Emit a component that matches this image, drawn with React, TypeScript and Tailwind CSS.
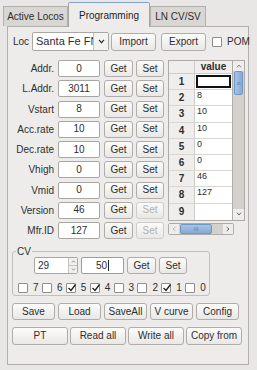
import React from "react";

const btn =
  "flex shrink-0 items-center justify-center whitespace-nowrap rounded-[3px] border border-[#b0ada8] bg-gradient-to-b from-[#fbfbfa] to-[#e9e8e6] text-[#2e2e2e] leading-none";
const input =
  "flex shrink-0 items-center justify-center rounded-[2px] border border-[#a9a7a3] bg-white text-[#2e2e2e] leading-none";

const fields: [string, string, boolean][] = [
  ["Addr.", "0", true],
  ["L.Addr.", "3011", true],
  ["Vstart", "8", true],
  ["Acc.rate", "10", true],
  ["Dec.rate", "10", true],
  ["Vhigh", "0", true],
  ["Vmid", "0", true],
  ["Version", "46", false],
  ["Mfr.ID", "127", false],
];

const rows = ["", "8", "10", "10", "0", "0", "46", "127", ""];

function Check({ on }: { on?: boolean }) {
  return (
    <span className="relative inline-block h-[10px] w-[10px] shrink-0 rounded-[1px] border border-[#8f8d89] bg-white">
      {on && (
        <svg viewBox="0 0 10 10" className="absolute left-[0px] top-[-1px] h-[10px] w-[10px]">
          <path d="M1.5 5 L4 7.5 L8.5 1.5" fill="none" stroke="#222" strokeWidth="1.4" />
        </svg>
      )}
    </span>
  );
}

function Tab({ label, active, w }: { label: string; active?: boolean; w: string }) {
  return (
    <div
      className={`flex items-center justify-center whitespace-nowrap border border-b-0 ${w} ${
        active
          ? "relative top-[1px] h-[25px] rounded-t-[2px] border-[#a8a6a2] border-t-[#7ea3d0] bg-[#edeceb] text-[#1e1e1e]"
          : "h-[20px] border-[#b2afab] bg-[#d9d7d3] text-[#2e2e2e]"
      }`}
    >
      {label}
    </div>
  );
}

export default function App() {
  return (
    <div
      className="relative h-[370px] w-[257px] overflow-hidden bg-[#e8e7e5] text-[10px] text-[#2e2e2e]"
      style={{ fontFamily: '"Liberation Sans", Arial, sans-serif' }}
    >
      <div className="flex h-[26px] items-end pl-[3px]">
        <Tab label="Active Locos" w="w-[65px]" />
        <Tab label="Programming" w="w-[82px]" active />
        <Tab label="LN CV/SV" w="w-[56px]" />
      </div>

      <div className="ml-[7px] h-[339px] w-[242px] border border-[#b2afab] bg-[#edeceb] px-[4px] pt-[5px]">
        {/* loc row */}
        <div className="flex h-[19px] items-center">
          <span className="w-[20px] shrink-0 pl-[1px]">Loc</span>
          <div className="flex h-[19px] w-[77px] shrink-0 items-center rounded-[2px] border border-[#a9a7a3] bg-white">
            <span className="w-[60px] overflow-hidden whitespace-nowrap pl-[3px] text-[11px]">Santa Fe FN</span>
            <span className="flex h-full w-[15px] items-center justify-center border-l border-[#c4c2be] bg-[#f3f3f2]">
              <svg viewBox="0 0 8 6" className="h-[5px] w-[7px]">
                <path d="M1 1 L4 4.5 L7 1" fill="none" stroke="#333" strokeWidth="1.4" />
              </svg>
            </span>
          </div>
          <div className={`${btn} ml-[2px] h-[18px] w-[45px]`}>Import</div>
          <div className={`${btn} ml-[5px] h-[18px] w-[45px]`}>Export</div>
          <span className="ml-[6px] flex shrink-0 items-center gap-[5px]">
            <Check />
            <span>POM</span>
          </span>
        </div>

        {/* fields + table */}
        <div className="mt-[9px] flex">
          <div className="flex w-[152px] shrink-0 flex-col gap-[3.25px]">
            {fields.map(([l, v, setOn]) => (
              <div key={l} className="flex h-[17px] items-center">
                <span className="w-[42px] shrink-0 whitespace-nowrap text-right">{l}</span>
                <div className={`${input} ml-[4px] h-[17px] w-[42px]`}>{v}</div>
                <div className={`${btn} ml-[4px] h-[17px] w-[29px]`}>Get</div>
                <div
                  className={`${btn} ml-[3px] h-[17px] w-[28px] ${
                    setOn ? "" : "border-[#cfcdc9] text-[#b4b2ae]"
                  }`}
                >
                  Set
                </div>
              </div>
            ))}
          </div>

          <div className="ml-[4px] flex flex-col">
            <div className="flex">
              <div className="flex w-[65px] flex-col border border-[#aeaba7] bg-white">
                <div className="flex h-[13px] border-b border-[#cfcdc9] bg-[#efeeed]">
                  <div className="w-[26px] border-r border-[#cfcdc9]" />
                  <div className="flex-1 text-center font-bold leading-[12px]">value</div>
                </div>
                {rows.map((v, i) => (
                  <div key={i} className="flex h-[16.2px] border-b border-[#d8d6d2] last:border-b-0">
                    <div className="flex w-[26px] items-center justify-center border-r border-[#cfcdc9] bg-[#efeeed] font-bold">
                      {i + 1}
                    </div>
                    <div className="relative flex-1 pl-[2px] text-[9px] leading-[11px]">
                      {i === 0 ? (
                        <div className="absolute inset-[1px] border-2 border-[#111]" />
                      ) : (
                        v
                      )}
                    </div>
                  </div>
                ))}
              </div>
              {/* vertical scrollbar */}
              <div className="flex w-[12px] flex-col border border-l-0 border-[#aeaba7] bg-[#d3d1cd]">
                <div className="flex h-[10px] items-center justify-center bg-[#eeedeb]">
                  <svg viewBox="0 0 8 6" className="h-[4px] w-[6px]">
                    <path d="M1 5 L4 1.5 L7 5" fill="none" stroke="#666" strokeWidth="1.2" />
                  </svg>
                </div>
                <div className="mx-[1px] flex h-[24px] items-center justify-center rounded-[2px] border border-[#6f97c8] bg-gradient-to-r from-[#a9c4e4] to-[#86aad6]">
                  <span className="text-[7px] leading-none text-[#5d80ad]">≡</span>
                </div>
                <div className="flex-1" />
                <div className="flex h-[11px] items-center justify-center bg-[#eeedeb]">
                  <svg viewBox="0 0 8 6" className="h-[4px] w-[6px]">
                    <path d="M1 1 L4 4.5 L7 1" fill="none" stroke="#444" strokeWidth="1.2" />
                  </svg>
                </div>
              </div>
            </div>
            {/* horizontal scrollbar */}
            <div className="mt-[2px] flex h-[12px] w-[66px] items-stretch rounded-[2px] border border-[#aeaba7] bg-[#d3d1cd]">
              <div className="flex w-[10px] items-center justify-center bg-[#eeedeb]">
                <svg viewBox="0 0 6 8" className="h-[6px] w-[4px]">
                  <path d="M5 1 L1.5 4 L5 7" fill="none" stroke="#aaa" strokeWidth="1.2" />
                </svg>
              </div>
              <div className="ml-[1px] flex w-[32px] items-center justify-center rounded-[2px] border border-[#6f97c8] bg-gradient-to-b from-[#a9c4e4] to-[#86aad6]">
                <span className="text-[6px] leading-none text-[#5d80ad]">III</span>
              </div>
              <div className="flex-1" />
              <div className="flex w-[10px] items-center justify-center bg-[#eeedeb]">
                <svg viewBox="0 0 6 8" className="h-[6px] w-[4px]">
                  <path d="M1 1 L4.5 4 L1 7" fill="none" stroke="#444" strokeWidth="1.2" />
                </svg>
              </div>
            </div>
          </div>
        </div>

        {/* CV group */}
        <div className="relative mt-[12px] h-[45px] w-[198px] rounded-[3px] border border-[#c2c0bc] pt-[5px]">
          <span className="absolute left-[3px] top-[-8px] bg-[#edeceb] px-[1px]">CV</span>
          <div className="flex h-[17px] items-center pl-[21px]">
            <div className="flex h-[17px] w-[44px] items-center rounded-[2px] border border-[#a9a7a3] bg-white">
              <span className="flex-1 pl-[3px]">29</span>
              <span className="flex h-full w-[9px] flex-col border-l border-[#c4c2be] bg-[#f1f0ee]">
                <span className="flex flex-1 items-center justify-center border-b border-[#c4c2be]">
                  <svg viewBox="0 0 8 6" className="h-[3px] w-[5px]">
                    <path d="M1 5 L4 1.5 L7 5" fill="none" stroke="#555" strokeWidth="1.2" />
                  </svg>
                </span>
                <span className="flex flex-1 items-center justify-center">
                  <svg viewBox="0 0 8 6" className="h-[3px] w-[5px]">
                    <path d="M1 1 L4 4.5 L7 1" fill="none" stroke="#555" strokeWidth="1.2" />
                  </svg>
                </span>
              </span>
            </div>
            <div className="ml-[3px] flex h-[17px] w-[43px] items-center justify-center rounded-[2px] border border-[#7ea3d0] bg-white">
              50<span className="ml-[1px] h-[11px] w-[1px] bg-[#222]" />
            </div>
            <div className={`${btn} ml-[3px] h-[17px] w-[29px]`}>Get</div>
            <div className={`${btn} ml-[3px] h-[17px] w-[28px]`}>Set</div>
          </div>
          <div className="mt-[6px] flex items-center pl-[5px]">
            {[7, 6, 5, 4, 3, 2, 1, 0].map((n) => (
              <span key={n} className="flex w-[24px] items-center gap-[5px]">
                <Check on={n === 5 || n === 4 || n === 1} />
                <span>{n}</span>
              </span>
            ))}
          </div>
        </div>

        {/* bottom buttons */}
        <div className="mt-[7px] flex gap-[3px]">
          {["Save", "Load", "SaveAll", "V curve", "Config"].map((t) => (
            <div key={t} className={`${btn} h-[17px] w-[43px]`}>
              {t}
            </div>
          ))}
        </div>
        <div className="mt-[7px] flex gap-[2px]">
          {["PT", "Read all", "Write all", "Copy from"].map((t) => (
            <div key={t} className={`${btn} h-[18px] w-[56px]`}>
              {t}
            </div>
          ))}
        </div>
      </div>
    </div>
  );
}
